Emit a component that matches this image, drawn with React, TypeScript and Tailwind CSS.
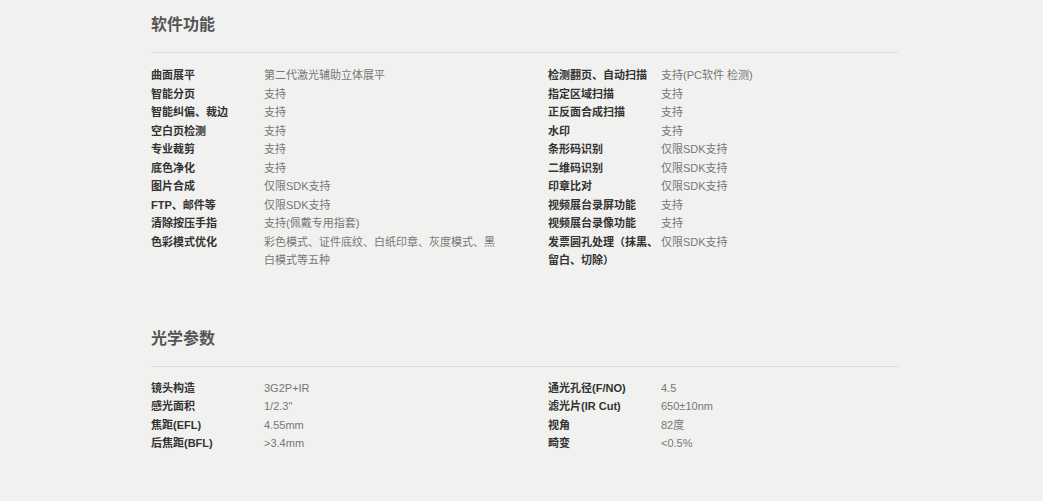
import React from "react";

type Row = [string, string];

const soft: [Row[], Row[]] = [
  [
    ["曲面展平", "第二代激光辅助立体展平"],
    ["智能分页", "支持"],
    ["智能纠偏、裁边", "支持"],
    ["空白页检测", "支持"],
    ["专业裁剪", "支持"],
    ["底色净化", "支持"],
    ["图片合成", "仅限SDK支持"],
    ["FTP、邮件等", "仅限SDK支持"],
    ["清除按压手指", "支持(佩戴专用指套)"],
    ["色彩模式优化", "彩色模式、证件底纹、白纸印章、灰度模式、黑白模式等五种"],
  ],
  [
    ["检测翻页、自动扫描", "支持(PC软件 检测)"],
    ["指定区域扫描", "支持"],
    ["正反面合成扫描", "支持"],
    ["水印", "支持"],
    ["条形码识别", "仅限SDK支持"],
    ["二维码识别", "仅限SDK支持"],
    ["印章比对", "仅限SDK支持"],
    ["视频展台录屏功能", "支持"],
    ["视频展台录像功能", "支持"],
    ["发票圆孔处理（抹黑、留白、切除）", "仅限SDK支持"],
  ],
];

const optic: [Row[], Row[]] = [
  [
    ["镜头构造", "3G2P+IR"],
    ["感光面积", "1/2.3\""],
    ["焦距(EFL)", "4.55mm"],
    ["后焦距(BFL)", ">3.4mm"],
  ],
  [
    ["通光孔径(F/NO)", "4.5"],
    ["滤光片(IR Cut)", "650±10nm"],
    ["视角", "82度"],
    ["畸变", "<0.5%"],
  ],
];

function Col({ rows }: { rows: Row[] }) {
  return (
    <div className="flex flex-col">
      {rows.map(([k, v], i) => (
        <div key={i} className="flex leading-[18.5px] text-[11px]">
          <div className="w-[113px] shrink-0 pr-[2px] font-bold text-[#333]">{k}</div>
          <div className="w-[236px] text-[#777]">{v}</div>
        </div>
      ))}
    </div>
  );
}

function Section({ title, data, gap }: { title: string; data: [Row[], Row[]]; gap: string }) {
  return (
    <div>
      <div className="text-[16px] leading-[24px] font-bold text-[#555]">{title}</div>
      <div className="mt-[15px] border-b border-[#dcdcda]" />
      <div className={`${gap} grid grid-cols-[397px_350px]`}>
        <Col rows={data[0]} />
        <Col rows={data[1]} />
      </div>
    </div>
  );
}

export default function App() {
  return (
    <div
      className="min-h-[501px] w-full bg-[#f1f1ef]"
      style={{ fontFamily: '"Liberation Sans", "Noto Sans CJK SC", sans-serif' }}
    >
      <div className="ml-[151px] w-[747px] pt-[13px]">
        <Section title="软件功能" data={soft} gap="mt-[13px]" />
        <div className="h-[57px]" />
        <Section title="光学参数" data={optic} gap="mt-[12px]" />
      </div>
    </div>
  );
}
